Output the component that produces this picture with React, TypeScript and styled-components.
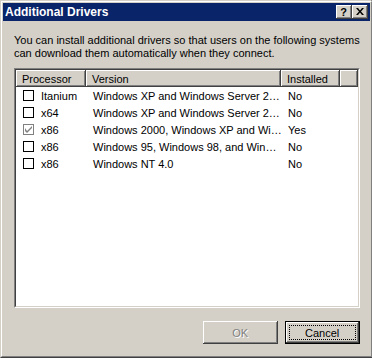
import React from "react";
import styled, { createGlobalStyle } from "styled-components";

const GlobalStyle = createGlobalStyle`
  html, body { margin: 0; padding: 0; background: #D4D0C8; }
  body { font-family: "Liberation Sans", Arial, sans-serif; font-size: 11px; color: #000; }
  * { box-sizing: border-box; }
`;

const Window = styled.div`
  width: 372px;
  height: 358px;
  background: #d4d0c8;
  border: 1px solid;
  border-color: #d4d0c8 #404040 #404040 #d4d0c8;
  display: flex;
`;

const WindowInner = styled.div`
  flex: 1;
  border: 1px solid;
  border-color: #ffffff #808080 #808080 #ffffff;
  padding: 1px;
  display: flex;
  flex-direction: column;
`;

const TitleBar = styled.div`
  height: 18px;
  background: #0a246a;
  display: flex;
  align-items: center;
  padding: 0 2px 0 2px;
`;

const Title = styled.div`
  flex: 1;
  color: #ffffff;
  font-weight: bold;
  font-size: 12px;
  padding-left: 0;
  white-space: nowrap;
`;

const CaptionButtons = styled.div`
  display: flex;
  gap: 0;
`;

const CaptionButton = styled.div`
  width: 16px;
  height: 14px;
  background: #d4d0c8;
  box-shadow: inset -1px -1px #404040, inset 1px 1px #ffffff,
    inset -2px -2px #808080, inset 2px 2px #d4d0c8;
  display: flex;
  align-items: center;
  justify-content: center;
  font-weight: bold;
  font-size: 11px;
  line-height: 14px;
  padding-bottom: 1px;
`;

const Body = styled.div`
  flex: 1;
  display: flex;
  flex-direction: column;
  padding: 13px 10px 11px 11px;
`;

const Intro = styled.p`
  margin: 0;
  line-height: 13px;
  white-space: nowrap;
`;

const ListBox = styled.div`
  flex: 1;
  margin-top: 8px;
  background: #ffffff;
  border: 1px solid;
  border-color: #808080 #ffffff #ffffff #808080;
  display: flex;
`;

const ListInner = styled.div`
  flex: 1;
  border: 1px solid;
  border-color: #404040 #d4d0c8 #d4d0c8 #404040;
  display: flex;
  flex-direction: column;
`;

const Header = styled.div`
  display: flex;
  height: 17px;
`;

const HeaderCell = styled.div<{ $w?: number }>`
  ${(p) => (p.$w ? `width: ${p.$w}px; flex: none;` : "flex: 1;")}
  background: #d4d0c8;
  box-shadow: inset -1px -1px #404040, inset 1px 1px #ffffff,
    inset -2px -2px #808080;
  padding-left: 6px;
  display: flex;
  align-items: center;
  white-space: nowrap;
  overflow: hidden;
`;

const Row = styled.div`
  display: grid;
  grid-template-columns: 70px 195px 59px;
  height: 17px;
  align-items: center;
`;

const Cell = styled.div`
  padding-left: 7px;
  white-space: nowrap;
  overflow: hidden;
  display: flex;
  align-items: center;
`;

const Check = styled.span<{ $disabled?: boolean }>`
  width: 11px;
  height: 11px;
  border: 1px solid ${(p) => (p.$disabled ? "#808080" : "#000000")};
  background: #ffffff;
  margin-right: 7px;
  display: inline-flex;
  align-items: center;
  justify-content: center;
  flex: none;
`;

const Footer = styled.div`
  margin-top: 13px;
  display: flex;
  justify-content: flex-end;
  gap: 7px;
`;

const Button = styled.div<{ $default?: boolean; $disabled?: boolean }>`
  width: 75px;
  height: 23px;
  background: #d4d0c8;
  display: flex;
  align-items: center;
  justify-content: center;
  position: relative;
  color: ${(p) => (p.$disabled ? "#808080" : "#000")};
  text-shadow: ${(p) => (p.$disabled ? "1px 1px #ffffff" : "none")};
  box-shadow: ${(p) =>
    p.$default
      ? "inset 0 0 0 1px #000, inset -2px -2px #404040, inset 2px 2px #ffffff, inset -3px -3px #808080"
      : "inset -1px -1px #404040, inset 1px 1px #ffffff, inset -2px -2px #808080"};
`;

const FocusRect = styled.span`
  position: absolute;
  inset: 4px;
  border: 1px dotted #000;
`;

const rows = [
  { cpu: "Itanium", ver: "Windows XP and Windows Server 2…", inst: "No", checked: false },
  { cpu: "x64", ver: "Windows XP and Windows Server 2…", inst: "No", checked: false },
  { cpu: "x86", ver: "Windows 2000, Windows XP and Wi…", inst: "Yes", checked: true },
  { cpu: "x86", ver: "Windows 95, Windows 98, and Win…", inst: "No", checked: false },
  { cpu: "x86", ver: "Windows NT 4.0", inst: "No", checked: false },
];

export default function App() {
  return (
    <>
      <GlobalStyle />
      <Window>
        <WindowInner>
          <TitleBar>
            <Title>Additional Drivers</Title>
            <CaptionButtons>
              <CaptionButton>?</CaptionButton>
              <CaptionButton>
                <svg width="8" height="7" viewBox="0 0 8 7">
                  <path d="M0 0h2l2 2.5L6 0h2L5 3.5 8 7H6L4 4.5 2 7H0l3-3.5z" fill="#000" />
                </svg>
              </CaptionButton>
            </CaptionButtons>
          </TitleBar>
          <Body>
            <Intro>
              You can install additional drivers so that users on the following systems
              <br />
              can download them automatically when they connect.
            </Intro>
            <ListBox>
              <ListInner>
                <Header>
                  <HeaderCell $w={70}>Processor</HeaderCell>
                  <HeaderCell $w={195}>Version</HeaderCell>
                  <HeaderCell $w={59}>Installed</HeaderCell>
                  <HeaderCell />
                </Header>
                {rows.map((r, i) => (
                  <Row key={i}>
                    <Cell>
                      <Check $disabled={r.checked}>
                        {r.checked && (
                          <svg width="7" height="7" viewBox="0 0 7 7">
                            <path d="M0 2v3l2 2 5-5V0L2 5z" fill="#808080" />
                          </svg>
                        )}
                      </Check>
                      {r.cpu}
                    </Cell>
                    <Cell>{r.ver}</Cell>
                    <Cell>{r.inst}</Cell>
                  </Row>
                ))}
              </ListInner>
            </ListBox>
            <Footer>
              <Button $disabled>OK</Button>
              <Button $default>
                Cancel
                <FocusRect />
              </Button>
            </Footer>
          </Body>
        </WindowInner>
      </Window>
    </>
  );
}
